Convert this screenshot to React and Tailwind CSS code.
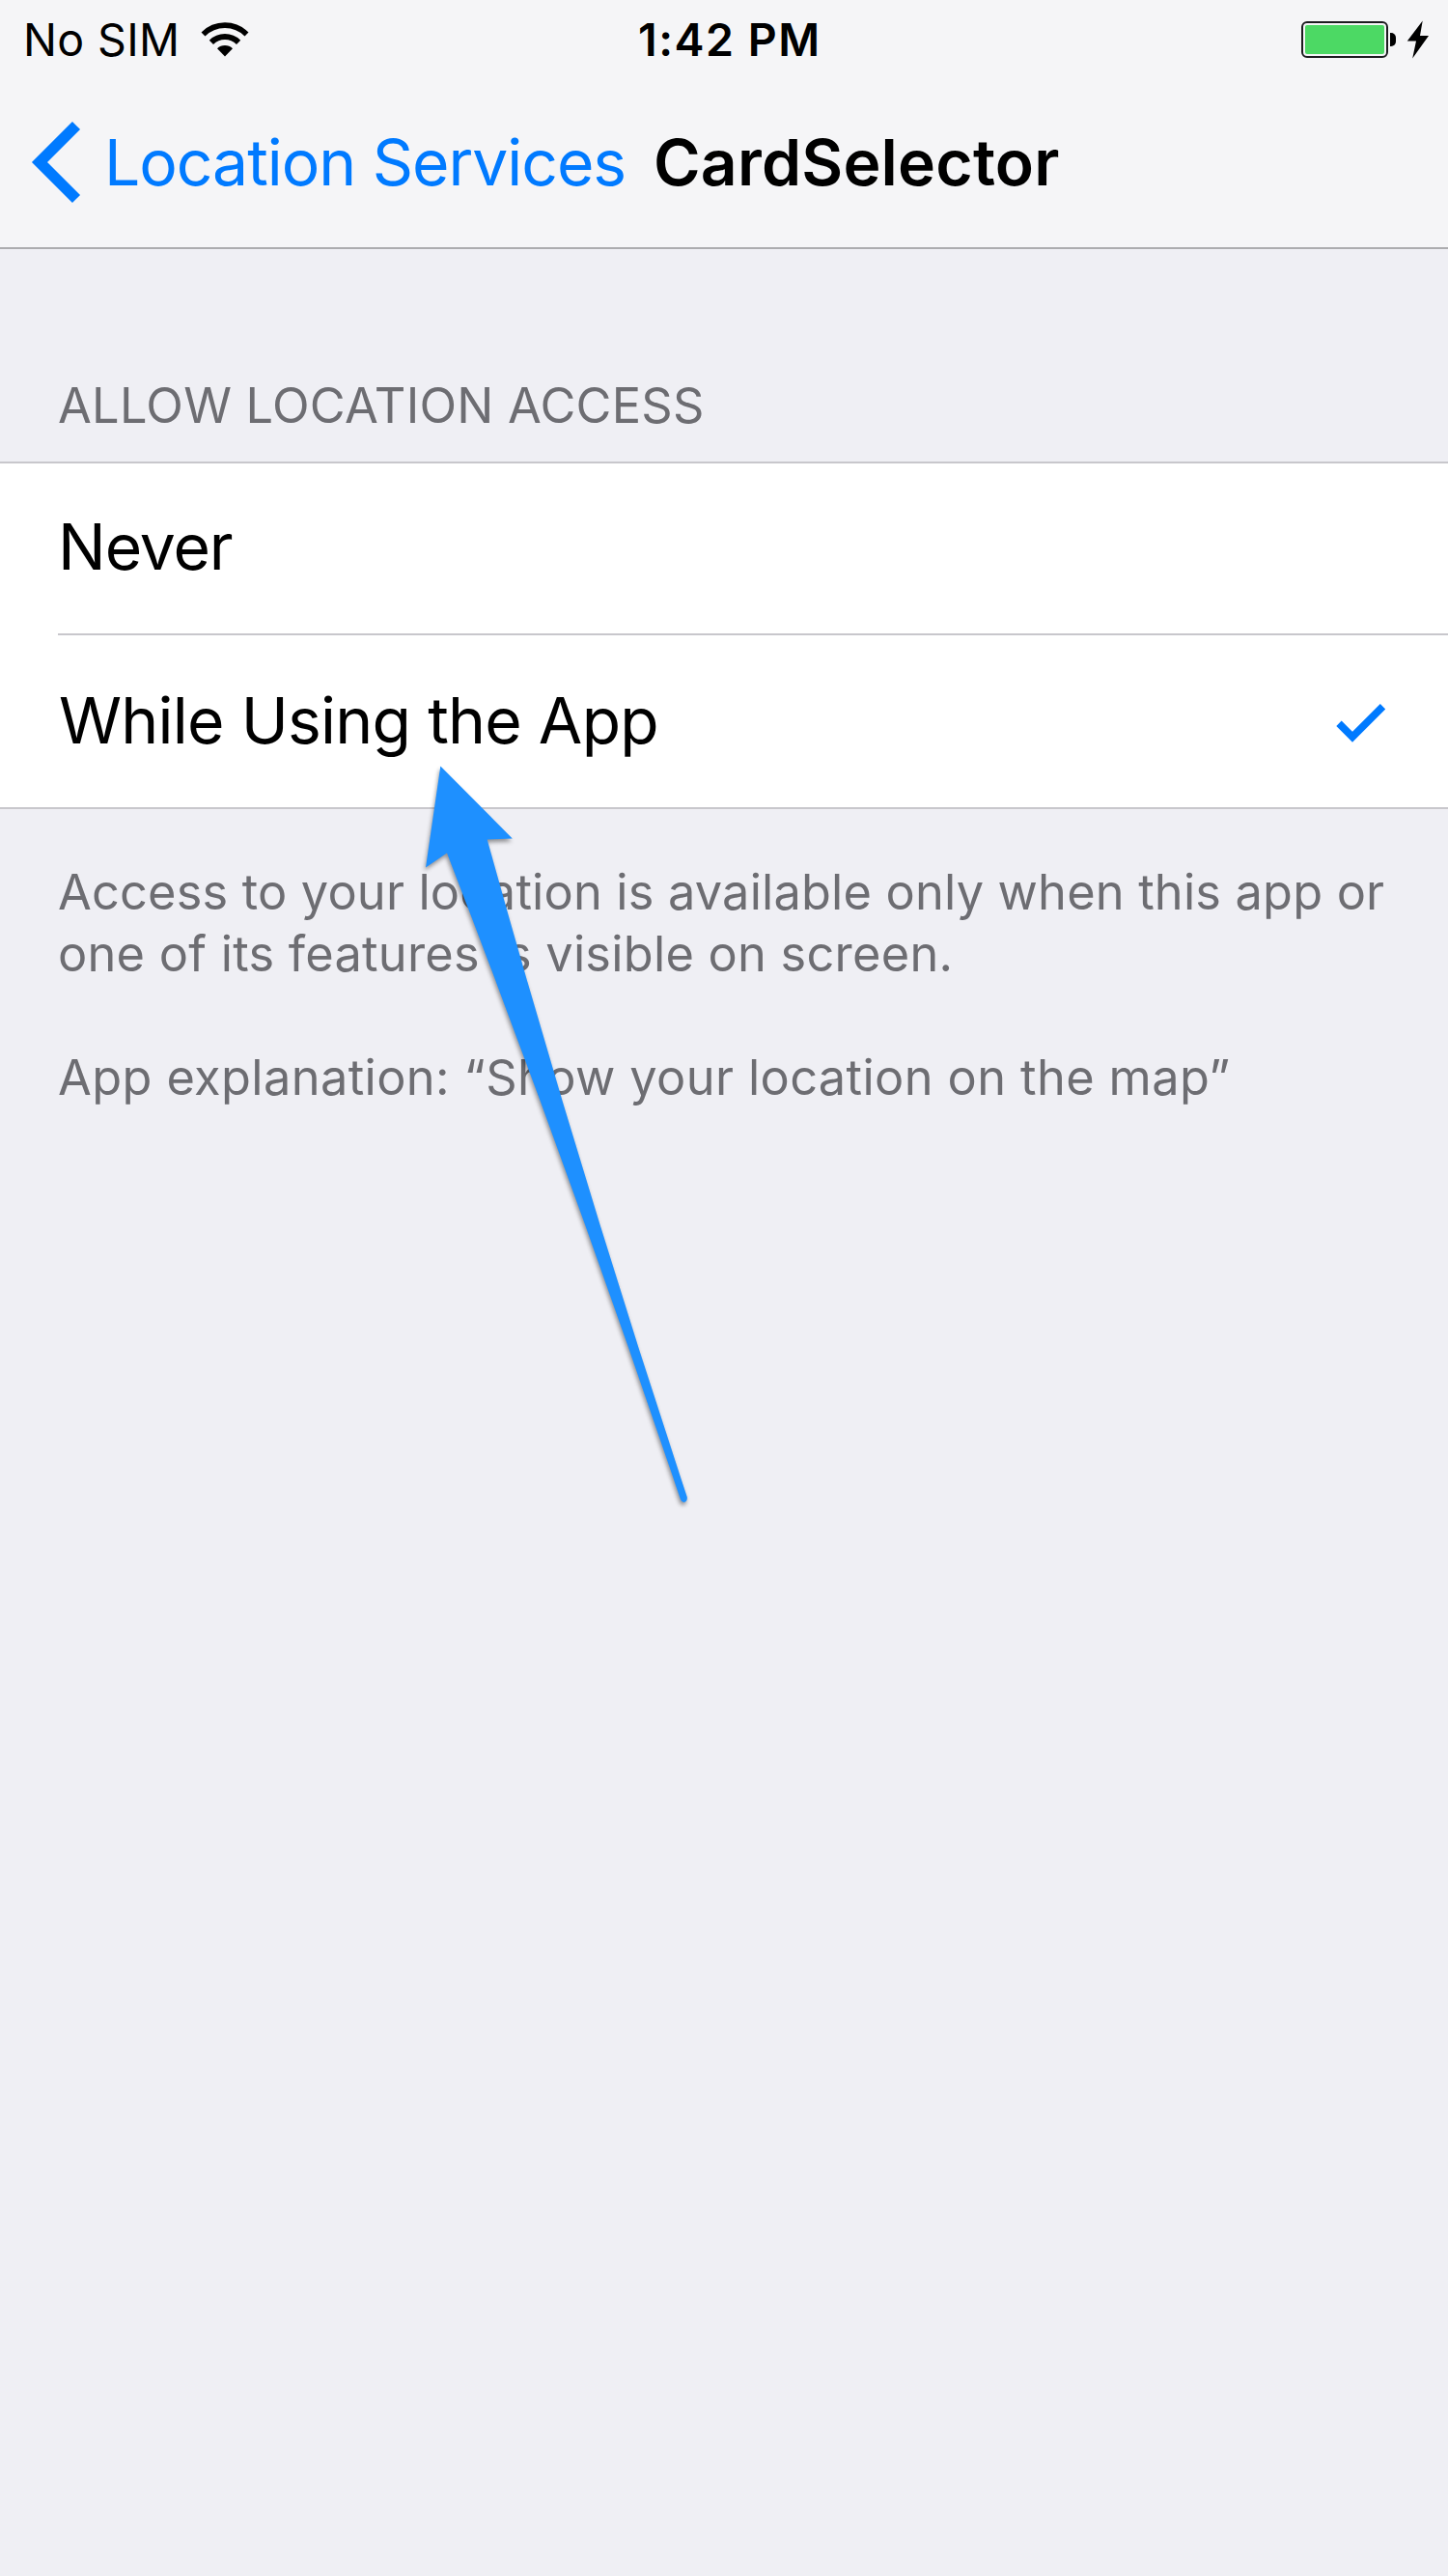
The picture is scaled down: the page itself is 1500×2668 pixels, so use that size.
function WifiIcon() {
  return (
    <svg className="ml-[21px] h-[38px] w-[52px]" viewBox="207 21 52 38" fill="none" stroke="#000">
      <path d="M210.5 34.5A31.8 31.8 0 0 1 255.5 34.5" strokeWidth="5.6" />
      <path d="M218.9 42.9A20 20 0 0 1 247.1 42.9" strokeWidth="6" />
      <path d="M233 57.6L225 49.3A11.4 11.4 0 0 1 241 49.3Z" fill="#000" stroke="none" />
    </svg>
  );
}

function Battery() {
  return (
    <div className="flex items-center">
      <div className="h-[38px] w-[90px] rounded-[6px] border-2 border-[#1c1c1f] p-[2px]">
        <div className="h-full w-full rounded-[2px] bg-[#4cd964]" />
      </div>
      <div className="ml-[2px] h-[14px] w-[6px] rounded-r-[5px] bg-black" />
      <svg className="ml-[11px] h-[40px] w-[24px]" viewBox="1457 20 24 40">
        <path d="M1473.7 20.5L1457.8 41.5H1467L1463.2 59.6L1480 35.9H1471Z" />
      </svg>
    </div>
  );
}

function StatusBar() {
  return (
    <div className="grid h-[82px] grid-cols-[661px_1fr_auto] items-center pr-[19px] text-[46.5px] leading-[82px] text-black">
      <div className="flex items-center pl-6">
        <span className="tracking-[0.34px]">No SIM</span>
        <WifiIcon />
      </div>
      <span className="font-semibold tracking-[1.5px]">1:42 PM</span>
      <Battery />
    </div>
  );
}

function NavBar() {
  return (
    <div className="flex h-[174px] items-center pb-[2px] pl-[31px] text-[66px] leading-[80px]">
      <svg className="h-[88px] w-[54px] shrink-0" viewBox="32 124 54 88" fill="none">
        <path d="M80 130L42 168L80 206" stroke="#007aff" strokeWidth="11.4" />
      </svg>
      <span className="ml-[23px] w-[569px] whitespace-nowrap tracking-[-1.04px] text-[#007aff]">Location Services</span>
      <h1 className="whitespace-nowrap font-semibold tracking-[0.2px] text-black">CardSelector</h1>
    </div>
  );
}

function Arrow() {
  return (
    <svg
      className="pointer-events-none absolute left-[420px] top-[780px] h-[800px] w-[320px] drop-shadow-[-1px_3px_2px_rgba(0,0,0,0.4)]"
      viewBox="420 780 320 800"
    >
      <path
        d="M456.3 793.5L530.8 868.5L504.7 869.5Q599 1210 711.8 1550.5Q712.3 1555.5 708.5 1556Q705.6 1555.5 704.6 1552Q592 1218 463 883.5L441 898.5Z"
        fill="#1e90ff"
      />
    </svg>
  );
}

export default function App() {
  return (
    <div className="relative h-[2668px] w-[1500px] overflow-hidden bg-[#efeff4] font-['Inter',sans-serif]">
      <header className="border-b-2 border-[#acacaf] bg-[#f5f5f7]">
        <StatusBar />
        <NavBar />
      </header>

      <main>
        <h2 className="pb-[28px] pl-[60px] pt-[132px] text-[50.5px] leading-[60px] tracking-[0.25px] text-[#6d6d72]">
          ALLOW LOCATION ACCESS
        </h2>

        <div className="border-y-2 border-[#c8c7cc] bg-white pl-[60px] text-[66px] leading-[80px] text-black">
          <div className="flex h-[178px] items-center border-b-2 border-[#c8c7cc] pb-[4px]">
            <span className="tracking-[-1.1px]">Never</span>
          </div>
          <div className="flex h-[178px] items-center justify-between pb-[2px] pl-px pr-[63px]">
            <span className="tracking-[-0.74px]">While Using the App</span>
            <svg className="mt-[6px] h-[44px] w-[54px]" viewBox="1383 728 54 44" fill="none">
              <path d="M1387 750.3L1401 764.3L1432.5 732.7" stroke="#007aff" strokeWidth="7.6" />
            </svg>
          </div>
        </div>

        <div className="whitespace-nowrap pl-[60px] pt-[54px] text-[50.5px] leading-[64px] text-[#6d6d72]">
          <p className="tracking-[0.18px]">Access to your location is available only when this app or</p>
          <p className="tracking-[0.25px]">one of its features is visible on screen.</p>
          <p className="mt-[64px] tracking-[0.38px]">App explanation: “Show your location on the map”</p>
        </div>
      </main>

      <Arrow />
    </div>
  );
}
